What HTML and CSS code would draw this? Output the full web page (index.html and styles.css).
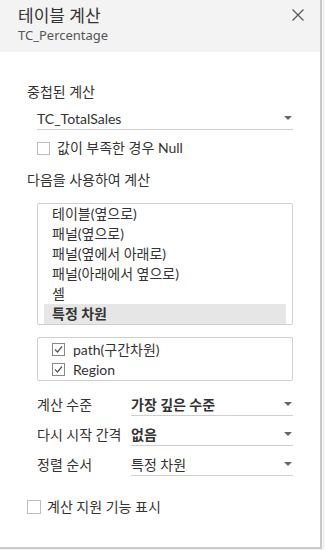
FILE: index.html
```html
<!DOCTYPE html>
<html lang="ko">
<head>
    <meta charset="UTF-8">
    <meta name="viewport" content="width=device-width, initial-scale=1.0">
    <title>테이블 계산</title>
    <link rel="stylesheet" href="styles.css">
</head>
<body>
    <div class="panel">
        <header class="panel-header">
            <div>
                <h1>테이블 계산</h1>
                <div class="subtitle">TC_Percentage</div>
            </div>
            <span class="close">
                <svg width="12" height="12" viewBox="0 0 12 12"><path d="M0.5 0.5 L11.5 11.5 M11.5 0.5 L0.5 11.5" stroke="#555" stroke-width="1.2" fill="none"/></svg>
            </span>
        </header>

        <div class="content">
            <div class="section-label">중첩된 계산</div>
            <div class="dropdown wide">
                <span>TC_TotalSales</span>
                <span class="arrow"></span>
            </div>
            <label class="check indent">
                <span class="box"></span>
                값이 부족한 경우 Null
            </label>

            <div class="section-label second">다음을 사용하여 계산</div>
            <ul class="listbox">
                <li>테이블(옆으로)</li>
                <li>패널(옆으로)</li>
                <li>패널(옆에서 아래로)</li>
                <li>패널(아래에서 옆으로)</li>
                <li>셀</li>
                <li class="selected">특정 차원</li>
            </ul>

            <div class="checklist">
                <label class="check">
                    <span class="box checked"><svg width="11" height="11" viewBox="0 0 11 11"><path d="M2 5.5 L4.5 8 L9 2.5" stroke="#555" stroke-width="1.2" fill="none"/></svg></span>
                    path(구간차원)
                </label>
                <label class="check">
                    <span class="box checked"><svg width="11" height="11" viewBox="0 0 11 11"><path d="M2 5.5 L4.5 8 L9 2.5" stroke="#555" stroke-width="1.2" fill="none"/></svg></span>
                    Region
                </label>
            </div>

            <div class="row first">
                <span class="row-label">계산 수준</span>
                <div class="dropdown">
                    <span class="bold">가장 깊은 수준</span>
                    <span class="arrow"></span>
                </div>
            </div>
            <div class="row">
                <span class="row-label">다시 시작 간격</span>
                <div class="dropdown">
                    <span class="bold">없음</span>
                    <span class="arrow"></span>
                </div>
            </div>
            <div class="row">
                <span class="row-label">정렬 순서</span>
                <div class="dropdown">
                    <span>특정 차원</span>
                    <span class="arrow"></span>
                </div>
            </div>

            <label class="check footer-check">
                <span class="box"></span>
                계산 지원 기능 표시
            </label>
        </div>
    </div>
</body>
</html>
```

FILE: styles.css
```css
body {
    margin: 0;
    background-color: #f4f4f4;
    font-family: "Noto Sans", "Noto Sans CJK KR", sans-serif;
    color: #333;
    font-size: 13px;
}
.panel {
    width: 320px;
    height: 547px;
    background-color: white;
    border-right: 2px solid #c9c9c9;
    border-bottom: 2px solid #c9c9c9;
}
.panel-header {
    background-color: #f3f3f3;
    height: 52px;
    padding: 0 16px 0 18px;
    display: flex;
    justify-content: space-between;
    align-items: flex-start;
    box-sizing: border-box;
}
.panel-header h1 {
    margin: 5px 0 0;
    font-size: 17px;
    font-weight: normal;
    line-height: 22px;
    color: #333;
}
.subtitle {
    font-size: 13px;
    color: #555;
    line-height: 16px;
}
.close {
    margin-top: 9px;
    line-height: 0;
}
.content {
    padding: 31px 27px 0 27px;
    font-family: "Lato", "Noto Sans CJK KR", sans-serif;
    font-size: 14px;
}
.section-label {
    line-height: 18px;
}
.section-label.second {
    margin-top: 14px;
}
.dropdown {
    display: flex;
    justify-content: space-between;
    align-items: center;
    border-bottom: 1px solid #cfcfcf;
    height: 22px;
    flex-grow: 1;
}
.dropdown.wide {
    margin: 6px 0 0 10px;
}
.arrow {
    width: 0;
    height: 0;
    border-left: 4px solid transparent;
    border-right: 4px solid transparent;
    border-top: 4px solid #666;
    margin-right: 1px;
}
.bold {
    font-weight: bold;
}
.check {
    display: flex;
    align-items: center;
    gap: 7px;
    line-height: 18px;
}
.check.indent {
    margin: 9px 0 0 10px;
}
.box {
    width: 13px;
    height: 13px;
    border: 1px solid #bdbdbd;
    box-sizing: border-box;
    display: flex;
    align-items: center;
    justify-content: center;
    background: white;
}
.box.checked {
    border-color: #888;
}
.listbox {
    list-style: none;
    margin: 14px 0 0 10px;
    padding: 0 6px 0 6px;
    border: 1px solid #cfcfcf;
    border-radius: 2px;
}
.listbox li {
    height: 20px;
    line-height: 20px;
    padding-left: 8px;
}
.listbox li.selected {
    background-color: #e6e6e6;
    font-weight: bold;
}
.checklist {
    margin: 12px 0 0 10px;
    border: 1px solid #cfcfcf;
    border-radius: 2px;
    padding: 2px 14px 1px;
    display: flex;
    flex-direction: column;
    gap: 1px;
}
.checklist .check {
    gap: 8px;
    line-height: 19px;
}
.row {
    display: flex;
    align-items: flex-end;
    margin-left: 10px;
    height: 30px;
}
.row.first {
    margin-top: 5px;
}
.row-label {
    width: 94px;
    line-height: 22px;
}
.footer-check {
    margin-top: 22px;
    gap: 6px;
}
.footer-check .box {
    width: 14px;
    height: 14px;
}
```
